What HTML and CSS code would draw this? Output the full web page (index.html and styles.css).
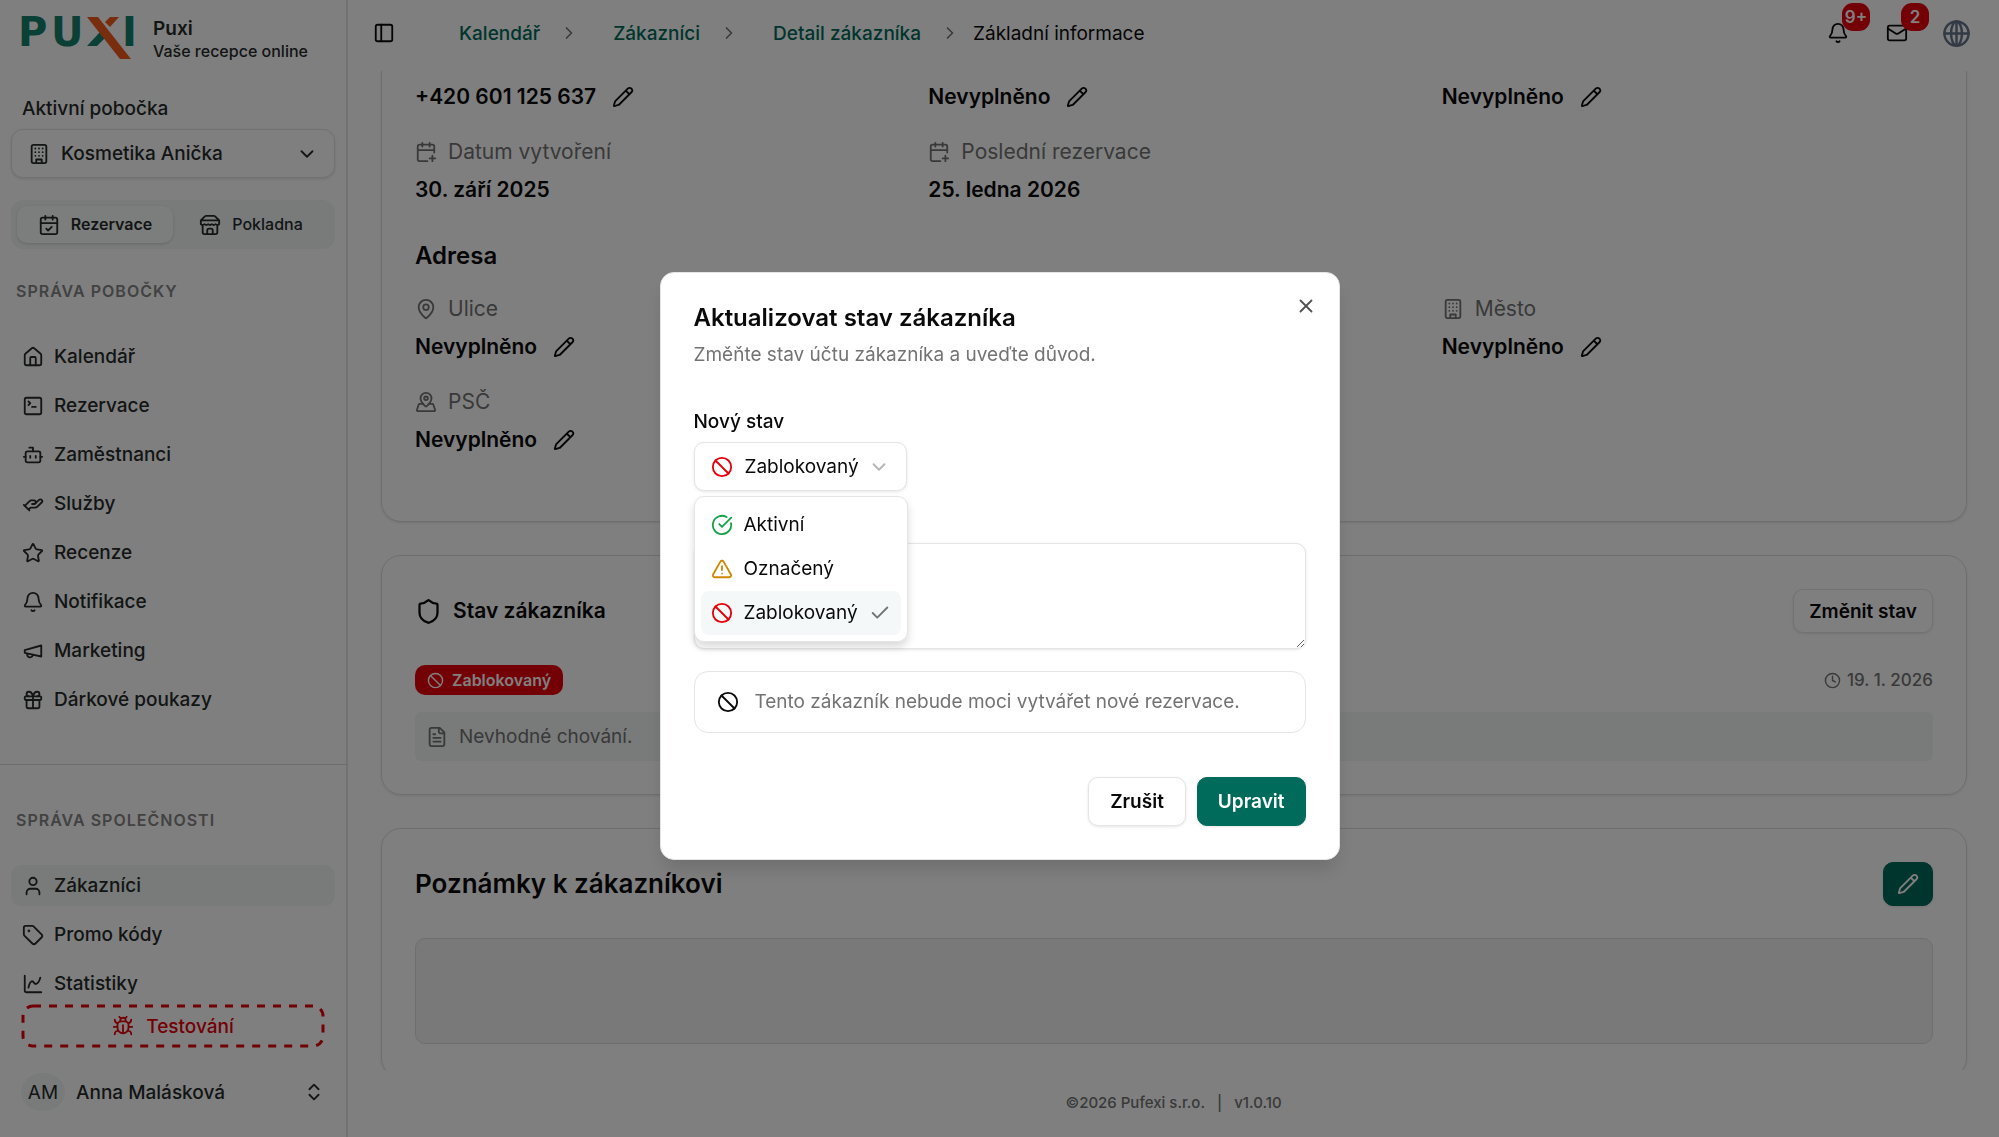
FILE: index.html
```html
<!DOCTYPE html>
<html lang="cs">
<head>
<meta charset="UTF-8">
<meta name="viewport" content="width=device-width, initial-scale=1">
<title>Puxi</title>
<link rel="stylesheet" href="styles.css">
</head>
<body>

<!-- Icon sprite -->
<svg class="sprite" aria-hidden="true">
    <symbol id="i-panel" viewBox="0 0 24 24"><rect width="18" height="18" x="3" y="3" rx="2"/><path d="M9 3v18"/></symbol>
    <symbol id="i-building" viewBox="0 0 24 24"><rect width="16" height="20" x="4" y="2" rx="2"/><path d="M9 22v-4h6v4M8 6h.01M16 6h.01M12 6h.01M12 10h.01M12 14h.01M16 10h.01M16 14h.01M8 10h.01M8 14h.01"/></symbol>
    <symbol id="i-down" viewBox="0 0 24 24"><path d="m6 9 6 6 6-6"/></symbol>
    <symbol id="i-right" viewBox="0 0 24 24"><path d="m9 18 6-6-6-6"/></symbol>
    <symbol id="i-updown" viewBox="0 0 24 24"><path d="m7 15 5 5 5-5M7 9l5-5 5 5"/></symbol>
    <symbol id="i-cal-check" viewBox="0 0 24 24"><path d="M8 2v4M16 2v4"/><rect width="18" height="18" x="3" y="4" rx="2"/><path d="M3 10h18M9 16l2 2 4-4"/></symbol>
    <symbol id="i-cal-plus" viewBox="0 0 24 24"><path d="M16 19h6M16 2v4M19 16v6M21 12.598V6a2 2 0 0 0-2-2H5a2 2 0 0 0-2 2v14a2 2 0 0 0 2 2h8.5M3 10h18M8 2v4"/></symbol>
    <symbol id="i-store" viewBox="0 0 24 24"><path d="m2 7 4.41-4.41A2 2 0 0 1 7.83 2h8.34a2 2 0 0 1 1.42.59L22 7M4 12v8a2 2 0 0 0 2 2h12a2 2 0 0 0 2-2v-8M15 22v-4a2 2 0 0 0-2-2h-2a2 2 0 0 0-2 2v4M2 7h20M22 7v3a2 2 0 0 1-2 2a2.7 2.7 0 0 1-1.59-.63.7.7 0 0 0-.82 0A2.7 2.7 0 0 1 16 12a2.7 2.7 0 0 1-1.59-.63.7.7 0 0 0-.82 0A2.7 2.7 0 0 1 12 12a2.7 2.7 0 0 1-1.59-.63.7.7 0 0 0-.82 0A2.7 2.7 0 0 1 8 12a2.7 2.7 0 0 1-1.59-.63.7.7 0 0 0-.82 0A2.7 2.7 0 0 1 4 12a2 2 0 0 1-2-2V7"/></symbol>
    <symbol id="i-home" viewBox="0 0 24 24"><path d="M15 21v-8a1 1 0 0 0-1-1h-4a1 1 0 0 0-1 1v8"/><path d="M3 10a2 2 0 0 1 .709-1.528l7-5.999a2 2 0 0 1 2.582 0l7 5.999A2 2 0 0 1 21 10v9a2 2 0 0 1-2 2H5a2 2 0 0 1-2-2z"/></symbol>
    <symbol id="i-terminal" viewBox="0 0 24 24"><path d="m7 11 2-2-2-2M11 13h4"/><rect width="18" height="18" x="3" y="3" rx="2"/></symbol>
    <symbol id="i-bot" viewBox="0 0 24 24"><path d="M12 8V4H8"/><rect width="16" height="12" x="4" y="8" rx="2"/><path d="M2 14h2M20 14h2M15 13v2M9 13v2"/></symbol>
    <symbol id="i-hand" viewBox="0 0 24 24"><path d="M11 12h2a2 2 0 1 0 0-4h-3c-.6 0-1.1.2-1.4.6L3 14"/><path d="m7 18 1.6-1.4c.3-.4.8-.6 1.4-.6h4c1.1 0 2.1-.4 2.8-1.2l4.6-4.4a2 2 0 0 0-2.75-2.91l-4.2 3.9M2 13l6 6"/></symbol>
    <symbol id="i-star" viewBox="0 0 24 24"><path d="M11.525 2.295a.53.53 0 0 1 .95 0l2.31 4.679a2.123 2.123 0 0 0 1.595 1.16l5.166.756a.53.53 0 0 1 .294.904l-3.736 3.638a2.123 2.123 0 0 0-.611 1.878l.882 5.14a.53.53 0 0 1-.771.56l-4.618-2.428a2.122 2.122 0 0 0-1.973 0L6.396 21.01a.53.53 0 0 1-.77-.56l.881-5.139a2.122 2.122 0 0 0-.611-1.879L2.16 9.795a.53.53 0 0 1 .294-.906l5.165-.755a2.122 2.122 0 0 0 1.597-1.16z"/></symbol>
    <symbol id="i-bell" viewBox="0 0 24 24"><path d="M10.268 21a2 2 0 0 0 3.464 0M3.262 15.326A1 1 0 0 0 4 17h16a1 1 0 0 0 .74-1.673C19.41 13.956 18 12.499 18 8A6 6 0 0 0 6 8c0 4.499-1.411 5.956-2.738 7.326"/></symbol>
    <symbol id="i-megaphone" viewBox="0 0 24 24"><path d="m3 11 18-5v12L3 14v-3zM11.6 16.8a3 3 0 1 1-5.8-1.6"/></symbol>
    <symbol id="i-gift" viewBox="0 0 24 24"><rect x="3" y="8" width="18" height="4" rx="1"/><path d="M12 8v13M19 12v7a2 2 0 0 1-2 2H7a2 2 0 0 1-2-2v-7M7.5 8a2.5 2.5 0 0 1 0-5A4.8 8 0 0 1 12 8a4.8 8 0 0 1 4.5-5 2.5 2.5 0 0 1 0 5"/></symbol>
    <symbol id="i-user" viewBox="0 0 24 24"><path d="M19 21v-2a4 4 0 0 0-4-4H9a4 4 0 0 0-4 4v2"/><circle cx="12" cy="7" r="4"/></symbol>
    <symbol id="i-tag" viewBox="0 0 24 24"><path d="M12.586 2.586A2 2 0 0 0 11.172 2H4a2 2 0 0 0-2 2v7.172a2 2 0 0 0 .586 1.414l8.704 8.704a2.426 2.426 0 0 0 3.42 0l6.58-6.58a2.426 2.426 0 0 0 0-3.42z"/><circle cx="7.5" cy="7.5" r=".5" fill="currentColor"/></symbol>
    <symbol id="i-chart" viewBox="0 0 24 24"><path d="M3 3v16a2 2 0 0 0 2 2h16M7 16c.5-2 1.5-7 4-7 2 0 2 3 4 3 2.5 0 4.5-5 5-7"/></symbol>
    <symbol id="i-bug" viewBox="0 0 24 24"><path d="m8 2 1.88 1.88M14.12 3.88 16 2M9 7.13v-1a3.003 3.003 0 1 1 6 0v1M12 20c-3.3 0-6-2.7-6-6v-3a4 4 0 0 1 4-4h4a4 4 0 0 1 4 4v3c0 3.3-2.7 6-6 6M12 20v-9M6.53 9C4.6 8.8 3 7.1 3 5M6 13H2M3 21c0-2.1 1.7-3.9 3.8-4M20.97 5c0 2.1-1.6 3.8-3.5 4M22 13h-4M17.2 17c2.1.1 3.8 1.9 3.8 4"/></symbol>
    <symbol id="i-pencil" viewBox="0 0 24 24"><path d="M21.174 6.812a1 1 0 0 0-3.986-3.987L3.842 16.174a2 2 0 0 0-.5.83l-1.321 4.352a.5.5 0 0 0 .623.622l4.353-1.32a2 2 0 0 0 .83-.497zM15 5l4 4"/></symbol>
    <symbol id="i-pin" viewBox="0 0 24 24"><path d="M20 10c0 4.993-5.539 10.193-7.399 11.799a1 1 0 0 1-1.202 0C9.539 20.193 4 14.993 4 10a8 8 0 0 1 16 0"/><circle cx="12" cy="10" r="3"/></symbol>
    <symbol id="i-pinned" viewBox="0 0 24 24"><path d="M18 8c0 3.613-3.869 7.429-5.393 8.795a1 1 0 0 1-1.214 0C9.87 15.429 6 11.613 6 8a6 6 0 0 1 12 0"/><circle cx="12" cy="8" r="2"/><path d="M8.714 14h-3.71a1 1 0 0 0-.948.683l-2.004 6A1 1 0 0 0 3 22h18a1 1 0 0 0 .948-1.316l-2-6a1 1 0 0 0-.949-.684h-3.712"/></symbol>
    <symbol id="i-shield" viewBox="0 0 24 24"><path d="M20 13c0 5-3.5 7.5-7.66 8.95a1 1 0 0 1-.67-.01C7.5 20.5 4 18 4 13V6a1 1 0 0 1 1-1c2 0 4.5-1.2 6.24-2.72a1.17 1.17 0 0 1 1.52 0C14.51 3.81 17 5 19 5a1 1 0 0 1 1 1z"/></symbol>
    <symbol id="i-ban" viewBox="0 0 24 24"><circle cx="12" cy="12" r="10"/><path d="m4.9 4.9 14.2 14.2"/></symbol>
    <symbol id="i-ok" viewBox="0 0 24 24"><path d="M21.801 10A10 10 0 1 1 17 3.335M9 11l3 3L22 4"/></symbol>
    <symbol id="i-warn" viewBox="0 0 24 24"><path d="m21.73 18-8-14a2 2 0 0 0-3.48 0l-8 14A2 2 0 0 0 4 21h16a2 2 0 0 0 1.73-3M12 9v4M12 17h.01"/></symbol>
    <symbol id="i-clock" viewBox="0 0 24 24"><circle cx="12" cy="12" r="10"/><path d="M12 6v6l4 2"/></symbol>
    <symbol id="i-file" viewBox="0 0 24 24"><path d="M15 2H6a2 2 0 0 0-2 2v16a2 2 0 0 0 2 2h12a2 2 0 0 0 2-2V7ZM14 2v4a2 2 0 0 0 2 2h4M10 9H8M16 13H8M16 17H8"/></symbol>
    <symbol id="i-mail" viewBox="0 0 24 24"><path d="m22 7-8.991 5.727a2 2 0 0 1-2.009 0L2 7"/><rect x="2" y="4" width="20" height="16" rx="2"/></symbol>
    <symbol id="i-globe" viewBox="0 0 24 24"><circle cx="12" cy="12" r="10"/><ellipse cx="12" cy="12" rx="4.5" ry="10"/><path d="M12 2v20M2 12h20"/></symbol>
    <symbol id="i-check" viewBox="0 0 24 24"><path d="M20 6 9 17l-5-5"/></symbol>
    <symbol id="i-x" viewBox="0 0 24 24"><path d="M18 6 6 18M6 6l12 12"/></symbol>
</svg>

<div class="app">

<!-- Sidebar -->
<aside class="sidebar">
    <a class="brand" href="#">
        <svg class="logo" viewBox="-6 -10 126 62" aria-hidden="true">
            <text class="logo-text" x="-3" y="30">P</text>
            <text class="logo-text" x="30" y="30">U</text>
            <polygon class="logo-teal" points="66,30 76,30 84,22 79,16"/>
            <polygon class="logo-orange" points="66,1 77,1 110,43 99,43"/>
            <polygon class="logo-orange" points="89,1 98,1 89,11 84,6"/>
            <text class="logo-text" x="101" y="30">I</text>
        </svg>
        <span class="brand-text"><strong>Puxi</strong><small>Vaše recepce online</small></span>
    </a>

    <div class="branch">
        <span class="branch-label" id="branch-label">Aktivní pobočka</span>
        <button class="branch-btn" aria-labelledby="branch-label branch-name">
            <svg class="icon"><use href="#i-building"/></svg>
            <span id="branch-name">Kosmetika Anička</span>
            <svg class="icon push"><use href="#i-down"/></svg>
        </button>
    </div>

    <div class="tabs">
        <button class="tab active"><svg class="icon"><use href="#i-cal-check"/></svg>Rezervace</button>
        <button class="tab"><svg class="icon"><use href="#i-store"/></svg>Pokladna</button>
    </div>

    <nav class="menu">
        <h2>Správa pobočky</h2>
        <a href="#"><svg class="icon"><use href="#i-home"/></svg>Kalendář</a>
        <a href="#"><svg class="icon"><use href="#i-terminal"/></svg>Rezervace</a>
        <a href="#"><svg class="icon"><use href="#i-bot"/></svg>Zaměstnanci</a>
        <a href="#"><svg class="icon"><use href="#i-hand"/></svg>Služby</a>
        <a href="#"><svg class="icon"><use href="#i-star"/></svg>Recenze</a>
        <a href="#"><svg class="icon"><use href="#i-bell"/></svg>Notifikace</a>
        <a href="#"><svg class="icon"><use href="#i-megaphone"/></svg>Marketing</a>
        <a href="#"><svg class="icon"><use href="#i-gift"/></svg>Dárkové poukazy</a>
    </nav>

    <nav class="menu company">
        <h2>Správa společnosti</h2>
        <a href="#" class="active"><svg class="icon"><use href="#i-user"/></svg>Zákazníci</a>
        <a href="#"><svg class="icon"><use href="#i-tag"/></svg>Promo kódy</a>
        <a href="#"><svg class="icon"><use href="#i-chart"/></svg>Statistiky</a>
    </nav>

    <button class="testing">
        <svg class="dashes" aria-hidden="true"><rect class="dash-line" x="2" y="2" rx="10"/></svg>
        <svg class="icon"><use href="#i-bug"/></svg>Testování
    </button>

    <button class="account">
        <span class="avatar">AM</span>
        <span>Anna Malásková</span>
        <svg class="icon push"><use href="#i-updown"/></svg>
    </button>
</aside>

<!-- Page -->
<div class="page">
    <header class="topbar">
        <button class="plain" aria-label="Menu"><svg class="icon"><use href="#i-panel"/></svg></button>
        <nav class="crumbs">
            <a href="#">Kalendář</a><svg class="icon"><use href="#i-right"/></svg>
            <a href="#">Zákazníci</a><svg class="icon"><use href="#i-right"/></svg>
            <a href="#">Detail zákazníka</a><svg class="icon"><use href="#i-right"/></svg>
            <span>Základní informace</span>
        </nav>
        <div class="actions">
            <button class="action" aria-label="Notifikace"><svg class="icon"><use href="#i-bell"/></svg><span class="count">9+</span></button>
            <button class="action" aria-label="Zprávy"><svg class="icon"><use href="#i-mail"/></svg><span class="count">2</span></button>
            <button class="action globe" aria-label="Jazyk"><svg class="icon"><use href="#i-globe"/></svg></button>
        </div>
    </header>

    <main class="content">
        <section class="card card-top">
            <div class="fields">
                <div class="value">+420 601 125 637 <button class="plain" aria-label="Upravit"><svg class="icon"><use href="#i-pencil"/></svg></button></div>
                <div class="value">Nevyplněno <button class="plain" aria-label="Upravit"><svg class="icon"><use href="#i-pencil"/></svg></button></div>
                <div class="value">Nevyplněno <button class="plain" aria-label="Upravit"><svg class="icon"><use href="#i-pencil"/></svg></button></div>
                <div class="field">
                    <div class="name"><svg class="icon"><use href="#i-cal-plus"/></svg>Datum vytvoření</div>
                    <div class="value">30. září 2025</div>
                </div>
                <div class="field">
                    <div class="name"><svg class="icon"><use href="#i-cal-plus"/></svg>Poslední rezervace</div>
                    <div class="value">25. ledna 2026</div>
                </div>
            </div>
            <h3>Adresa</h3>
            <div class="fields">
                <div class="field">
                    <div class="name"><svg class="icon"><use href="#i-pin"/></svg>Ulice</div>
                    <div class="value">Nevyplněno <button class="plain" aria-label="Upravit"><svg class="icon"><use href="#i-pencil"/></svg></button></div>
                </div>
                <div class="field last-col">
                    <div class="name"><svg class="icon"><use href="#i-building"/></svg>Město</div>
                    <div class="value">Nevyplněno <button class="plain" aria-label="Upravit"><svg class="icon"><use href="#i-pencil"/></svg></button></div>
                </div>
                <div class="field">
                    <div class="name"><svg class="icon"><use href="#i-pinned"/></svg>PSČ</div>
                    <div class="value">Nevyplněno <button class="plain" aria-label="Upravit"><svg class="icon"><use href="#i-pencil"/></svg></button></div>
                </div>
            </div>
        </section>

        <section class="card">
            <div class="row">
                <h3 class="status-title"><svg class="icon"><use href="#i-shield"/></svg>Stav zákazníka</h3>
                <button class="btn btn-small">Změnit stav</button>
            </div>
            <div class="row status-row">
                <span class="blocked"><svg class="icon"><use href="#i-ban"/></svg>Zablokovaný</span>
                <span class="date"><svg class="icon"><use href="#i-clock"/></svg>19. 1. 2026</span>
            </div>
            <p class="reason"><svg class="icon"><use href="#i-file"/></svg>Nevhodné chování.</p>
        </section>

        <section class="card">
            <div class="row">
                <h3 class="notes-title" id="notes-title">Poznámky k zákazníkovi</h3>
                <button class="btn btn-primary btn-edit" aria-label="Upravit"><svg class="icon"><use href="#i-pencil"/></svg></button>
            </div>
            <textarea class="notes" aria-labelledby="notes-title" disabled></textarea>
        </section>
    </main>

    <footer class="footer"><span>©2026 Pufexi s.r.o.</span><span>|</span><span>v1.0.10</span></footer>
</div>
</div>

<!-- Dialog -->
<div class="overlay">
<form class="dialog" role="dialog" aria-labelledby="dialog-title">
    <button type="button" class="plain close" aria-label="Zavřít"><svg class="icon"><use href="#i-x"/></svg></button>
    <h2 id="dialog-title">Aktualizovat stav zákazníka</h2>
    <p class="subtitle">Změňte stav účtu zákazníka a uveďte důvod.</p>

    <label for="status">Nový stav</label>
    <div class="select">
        <svg class="icon red"><use href="#i-ban"/></svg>
        <select id="status">
            <option>Aktivní</option>
            <option>Označený</option>
            <option selected>Zablokovaný</option>
        </select>
        <svg class="icon arrow"><use href="#i-down"/></svg>
        <ul class="options">
            <li><svg class="icon green"><use href="#i-ok"/></svg>Aktivní</li>
            <li><svg class="icon amber"><use href="#i-warn"/></svg>Označený</li>
            <li class="selected"><svg class="icon red"><use href="#i-ban"/></svg>Zablokovaný<svg class="icon tick"><use href="#i-check"/></svg></li>
        </ul>
    </div>

    <textarea class="reason-input" aria-label="Důvod"></textarea>

    <div class="alert"><svg class="icon"><use href="#i-ban"/></svg>Tento zákazník nebude moci vytvářet nové rezervace.</div>

    <div class="buttons">
        <button type="button" class="btn">Zrušit</button>
        <button type="submit" class="btn btn-primary">Upravit</button>
    </div>
</form>
</div>

</body>
</html>
```
FILE: styles.css
```css
* {
    box-sizing: border-box;
}

body {
    margin: 0;
    font-family: Inter, "Liberation Sans", sans-serif;
    font-size: 19px;
    line-height: 27px;
    color: #0a0a0a;
    background: #fff;
}

h2, h3, p, ul {
    margin: 0;
    padding: 0;
}

button, select, textarea {
    font: inherit;
    color: inherit;
}

button {
    cursor: pointer;
}

a {
    color: inherit;
    text-decoration: none;
}

.sprite {
    display: none;
}

.icon {
    width: 22px;
    height: 22px;
    flex: none;
    display: block;
    fill: none;
    stroke: currentColor;
    stroke-width: 2;
    stroke-linecap: round;
    stroke-linejoin: round;
}

.push {
    margin-left: auto;
}

.plain {
    display: flex;
    padding: 0;
    border: none;
    background: none;
}

.red { color: #e7000b; }
.green { color: #16a34a; }
.amber { color: #d08700; }

.app {
    display: flex;
    height: 100vh;
    overflow: hidden;
}

/* Sidebar */
.sidebar {
    width: 348px;
    flex: none;
    display: flex;
    flex-direction: column;
    border-right: 2px solid #e5e5e5;
    color: #262b2a;
    font-weight: 500;
}

.brand {
    display: flex;
    gap: 12px;
    padding: 6px 15px 0;
}

.logo {
    width: 126px;
    height: 62px;
    flex: none;
}

.logo-text {
    font-family: "DejaVu Sans", sans-serif;
    font-size: 40px;
    font-weight: 700;
    fill: #17806e;
}

.logo-teal { fill: #17806e; }
.logo-orange { fill: #f05a1e; }

.brand-text {
    display: flex;
    flex-direction: column;
    padding-top: 11px;
    white-space: nowrap;
}

.brand-text strong {
    font-weight: 600;
    line-height: 24px;
}

.brand-text small {
    font-size: 16px;
    line-height: 20px;
}

.branch {
    padding: 27px 11px 0;
}

.branch-label {
    display: block;
    padding: 0 11px 7px;
}

.branch-btn {
    width: 100%;
    height: 49px;
    display: flex;
    align-items: center;
    gap: 11px;
    padding: 0 16px;
    background: #fff;
    border: 1px solid #e0e4e3;
    border-radius: 12px;
    box-shadow: 0 1px 3px rgba(0,0,0,0.12);
    font-weight: 500;
}

.tabs {
    display: grid;
    grid-template-columns: 1fr 1fr;
    margin: 22px 11px 0;
    padding: 6px;
    background: #f1f6f5;
    border-radius: 12px;
}

.tab {
    height: 37px;
    display: flex;
    align-items: center;
    justify-content: center;
    gap: 11px;
    border: none;
    border-radius: 10px;
    background: none;
    font-size: 16px;
    font-weight: 500;
}

.tab.active {
    background: #f8fbfa;
    box-shadow: 0 1px 3px rgba(0,0,0,0.15);
    font-weight: 600;
}

.menu {
    display: flex;
    flex-direction: column;
    gap: 8px;
    padding: 29px 11px 44px;
}

.menu h2 {
    padding: 0 5px;
    margin-bottom: 23px;
    font-size: 16px;
    font-weight: 600;
    letter-spacing: 1px;
    text-transform: uppercase;
    color: #858585;
}

.menu a {
    height: 41px;
    display: flex;
    align-items: center;
    gap: 10px;
    padding: 0 11px;
    border-radius: 10px;
}

.menu a.active {
    background: #f1f6f5;
}

.menu.company {
    padding: 42px 11px 0;
    border-top: 1px solid #d8d8d8;
}

.testing {
    position: relative;
    height: 44px;
    display: flex;
    flex: none;
    align-items: center;
    justify-content: center;
    gap: 12px;
    margin: 0 21px;
    background: none;
    border: none;
    color: #e7000b;
    font-weight: 500;
}

.dashes {
    position: absolute;
    inset: 0;
    width: 100%;
    height: 100%;
}

.dash-line {
    width: calc(100% - 4px);
    height: calc(100% - 4px);
    fill: none;
    stroke: currentColor;
    stroke-width: 3;
    stroke-dasharray: 8 8;
}

.account {
    display: flex;
    align-items: center;
    gap: 11px;
    margin: 25px 21px 0;
    padding: 0;
    background: none;
    border: none;
    font-weight: 500;
}

.avatar {
    width: 44px;
    height: 38px;
    display: grid;
    place-items: center;
    border-radius: 50%;
    background: #f1f6f5;
    font-weight: 400;
}

/* Top bar */
.page {
    flex: 1;
    min-width: 0;
    display: flex;
    flex-direction: column;
}

.topbar {
    height: 71px;
    flex: none;
    display: flex;
    align-items: center;
    padding: 0 19px 5px 25px;
}

.crumbs {
    display: flex;
    align-items: center;
    gap: 13px;
    padding-left: 43px;
}

.crumbs .icon {
    width: 20px;
    height: 20px;
    color: #737373;
}

.crumbs a {
    padding: 0 6px 0 21px;
    color: #006b5b;
    font-weight: 500;
}

.actions {
    display: flex;
    gap: 11px;
    margin-left: auto;
}

.action {
    position: relative;
    width: 48px;
    height: 48px;
    display: grid;
    place-items: center;
    padding: 0;
    border: none;
    background: none;
}

.action.globe .icon {
    width: 29px;
    height: 29px;
    color: #64748b;
    stroke-width: 2;
}

.count {
    position: absolute;
    top: -6px;
    right: -8px;
    width: 28px;
    height: 28px;
    border-radius: 11px;
    background: #e7000b;
    color: #fff;
    font-size: 17px;
    font-weight: 600;
    line-height: 28px;
}

/* Cards */
.content {
    flex: 1;
    min-height: 0;
    overflow: hidden;
    padding: 0 32px 0 33px;
}

.card {
    margin-bottom: 33px;
    padding: 33px;
    border: 1px solid #dcdcdc;
    border-radius: 20px;
    box-shadow: 0 1px 3px rgba(0,0,0,0.1);
}

.card-top {
    padding: 9px 33px 65px;
    border-top: none;
    border-radius: 0 0 20px 20px;
}

.fields {
    display: grid;
    grid-template-columns: repeat(3, 1fr);
    gap: 22px;
    font-size: 21px;
    line-height: 33px;
}

.last-col {
    grid-column: 3;
}

.name {
    display: flex;
    align-items: center;
    gap: 11px;
    margin-bottom: 5px;
    color: #737373;
}

.value {
    display: flex;
    align-items: center;
    gap: 16px;
    font-weight: 600;
}

.card h3 {
    font-size: 24px;
    font-weight: 600;
    line-height: 38px;
}

.card-top h3 {
    margin: 31px 0 17px;
}

.row {
    display: flex;
    align-items: center;
    justify-content: space-between;
}

.card .status-title {
    display: flex;
    align-items: center;
    gap: 11px;
    font-size: 21px;
}

.status-title .icon {
    width: 27px;
    height: 27px;
}

.card .notes-title {
    font-size: 26px;
}

.btn {
    height: 49px;
    padding: 0 21px;
    background: #fff;
    border: 1px solid #e5e5e5;
    border-radius: 10px;
    box-shadow: 0 1px 3px rgba(0,0,0,0.1);
    font-weight: 600;
}

.btn-small {
    height: 44px;
    padding: 0 15px;
}

.btn-primary {
    padding: 0 20px;
    background: #006b5b;
    border-color: #006b5b;
    color: #fff;
}

.btn-edit {
    height: 44px;
    padding: 0 13px;
}

.status-row {
    margin: 32px 0 17px;
}

.blocked {
    height: 30px;
    display: flex;
    align-items: center;
    gap: 8px;
    padding: 0 12px;
    border-radius: 10px;
    background: #e7000b;
    color: #fff;
    font-size: 16px;
    font-weight: 600;
}

.blocked .icon {
    width: 17px;
    height: 17px;
}

.date {
    display: flex;
    align-items: center;
    gap: 6px;
    font-size: 17px;
    font-weight: 500;
    color: #737373;
}

.date .icon {
    width: 17px;
    height: 17px;
}

.reason {
    display: flex;
    align-items: center;
    gap: 11px;
    padding: 11px;
    border-radius: 6px;
    background: #f1f6f5;
    color: #737373;
}

.notes {
    display: block;
    width: 100%;
    height: 106px;
    margin-top: 32px;
    background: #f3f3f3;
    border: 1px solid #dcdcdc;
    border-radius: 10px;
    resize: none;
}

.footer {
    height: 67px;
    flex: none;
    display: flex;
    justify-content: center;
    gap: 12px;
    padding-top: 19px;
    font-size: 15px;
    font-weight: 500;
    color: #737373;
}

/* Dialog */
.overlay {
    position: fixed;
    inset: 0;
    display: grid;
    place-items: center;
    padding-bottom: 6px;
    background: rgba(0,0,0,0.5);
}

.dialog {
    position: relative;
    width: 680px;
    max-width: 100%;
    padding: 33px;
    background: #fff;
    border: 1px solid #e5e5e5;
    border-radius: 14px;
    box-shadow: 0 12px 20px -4px rgba(0,0,0,0.15);
}

.close {
    position: absolute;
    top: 22px;
    right: 22px;
    color: #525252;
}

.dialog h2 {
    font-size: 24px;
    font-weight: 600;
    line-height: 24px;
}

.subtitle {
    margin: 11px 0 44px;
    color: #737373;
}

.dialog label {
    display: block;
    margin-bottom: 10px;
    font-weight: 500;
    line-height: 20px;
}

.select {
    position: relative;
    width: fit-content;
}

.select > .icon {
    position: absolute;
    top: 14px;
    left: 17px;
    pointer-events: none;
}

.select > .arrow {
    left: auto;
    right: 17px;
    color: #b5b5b5;
}

.select select {
    display: block;
    height: 49px;
    padding: 0 46px 0 50px;
    appearance: none;
    background: #fff;
    border: 1px solid #e5e5e5;
    border-radius: 10px;
    box-shadow: 0 1px 3px rgba(0,0,0,0.1);
}

.options {
    position: absolute;
    top: 54px;
    left: 0;
    z-index: 1;
    padding: 6px;
    list-style: none;
    background: #fff;
    border: 1px solid #e5e5e5;
    border-radius: 10px;
    box-shadow: 0 5px 9px rgba(0,0,0,0.15);
}

.options li {
    height: 44px;
    display: flex;
    align-items: center;
    gap: 11px;
    padding: 0 10px;
    border-radius: 8px;
    white-space: nowrap;
}

.options .selected {
    background: #f4f8f8;
}

.tick {
    color: #737373;
}

.reason-input {
    display: block;
    width: 100%;
    height: 106px;
    margin-top: 52px;
    padding: 11px 17px;
    background: #fff;
    border: 1px solid #e5e5e5;
    border-radius: 10px;
    box-shadow: 0 1px 3px rgba(0,0,0,0.1);
    resize: vertical;
}

.alert {
    display: flex;
    align-items: center;
    gap: 16px;
    margin-top: 22px;
    padding: 17px 18px;
    border: 1px solid #e5e5e5;
    border-radius: 14px;
    line-height: 26px;
    color: #737373;
}

.alert .icon {
    margin-left: 4px;
    color: #0a0a0a;
}

.buttons {
    display: flex;
    justify-content: flex-end;
    gap: 11px;
    margin-top: 44px;
}
```
